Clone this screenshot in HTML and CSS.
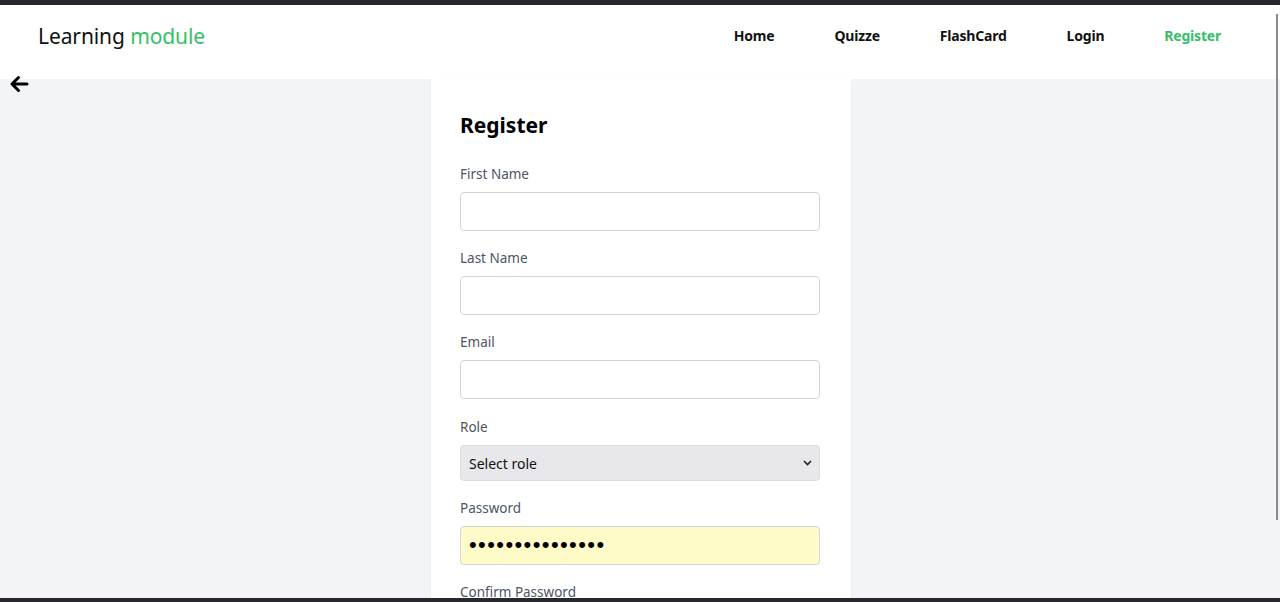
FILE: index.html
```html
<!DOCTYPE html>
<html lang="en">
<head>
<meta charset="utf-8">
<title>Learning module - Register</title>
<link rel="stylesheet" href="styles.css">
</head>
<body>
<div class="frame-top"></div>
<header class="header">
  <div class="logo">Learning <span class="accent">module</span></div>
  <nav class="nav">
    <a href="#">Home</a>
    <a href="#">Quizze</a>
    <a href="#">FlashCard</a>
    <a href="#">Login</a>
    <a href="#" class="active">Register</a>
  </nav>
</header>
<main class="main">
  <a href="#" class="back" aria-label="Back">
    <svg width="20" height="18" viewBox="0 0 20 18"><path d="M18 9H3M9.5 2.5L3 9l6.5 6.5" fill="none" stroke="#000" stroke-width="3" stroke-linecap="round" stroke-linejoin="round"/></svg>
  </a>
  <section class="card">
    <h1 class="title">Register</h1>
    <div class="field">
      <label>First Name</label>
      <input type="text" class="input">
    </div>
    <div class="field">
      <label>Last Name</label>
      <input type="text" class="input">
    </div>
    <div class="field">
      <label>Email</label>
      <input type="email" class="input">
    </div>
    <div class="field field-select">
      <label>Role</label>
      <div class="select">
        <span>Select role</span>
        <svg width="9" height="6" viewBox="0 0 9 6"><path d="M1 1l3.5 3.5L8 1" fill="none" stroke="#222" stroke-width="1.6"/></svg>
      </div>
    </div>
    <div class="field">
      <label>Password</label>
      <div class="input autofill">•••••••••••••••</div>
    </div>
    <div class="field">
      <label>Confirm Password</label>
      <input type="password" class="input">
    </div>
  </section>
</main>
<div class="scroll-thumb"></div>
<div class="frame-bottom"></div>
</body>
</html>
```
FILE: styles.css
```css
* { box-sizing: border-box; }
html, body { margin: 0; padding: 0; }
body {
  font-family: "Noto Sans", "Open Sans", sans-serif;
  background: #f3f4f6;
  color: #111;
  overflow: hidden;
  height: 602px;
}
.frame-top { height: 5px; background: #27272d; }
.frame-bottom {
  position: fixed; left: 0; right: 0; bottom: 0; height: 4px; background: #27272d;
}
.scroll-thumb {
  position: fixed; left: 1276px; top: 14px; width: 2px; height: 506px; background: #8c8c8c;
}
.header {
  height: 74px;
  background: #fff;
  display: flex;
  align-items: center;
  justify-content: space-between;
  padding: 0 59px 13px 38px;
}
.logo { font-size: 21px; color: #111; letter-spacing: -0.1px; }
.logo .accent { color: #35c067; }
.nav { display: flex; gap: 60px; }
.nav a {
  font-size: 14px; font-weight: 700; color: #111; text-decoration: none; letter-spacing: -0.2px;
}
.nav a.active { color: #35c067; }
.main { position: relative; display: flex; justify-content: center; padding-left: 2px; }
.back { position: absolute; left: 9px; top: -4px; display: block; line-height: 0; }
.card {
  width: 420px;
  background: #fff;
  padding: 30px 30px 30px 29px;
  box-shadow: 0 1px 3px rgba(0,0,0,0.06);
  border-radius: 0 0 4px 4px;
}
.title { margin: 0 0 23px; font-size: 21px; line-height: 32px; font-weight: 700; color: #000; }
.field { display: flex; flex-direction: column; margin-bottom: 17px; }
.field-select { padding-top: 1px; }
.field label { font-size: 13.5px; line-height: 20px; color: #4b5563; margin-bottom: 8px; }
.input {
  width: 360px; height: 39px; border: 1px solid #d1d5db; border-radius: 4px; background: #fff;
  font-family: inherit; font-size: 14px; padding: 0 8px;
}
.autofill {
  background: #fefbc9; display: flex; align-items: center;
  font-family: "Liberation Sans", sans-serif; font-size: 22px; letter-spacing: 1.4px; color: #000;
  padding-bottom: 2px;
}
.select {
  width: 360px; height: 36px; border: 1px solid #dcdce0; border-radius: 4px; background: #e8e8ec;
  display: flex; align-items: center; justify-content: space-between; padding: 0 7px 0 8px;
  font-size: 14px; color: #111;
}
```
